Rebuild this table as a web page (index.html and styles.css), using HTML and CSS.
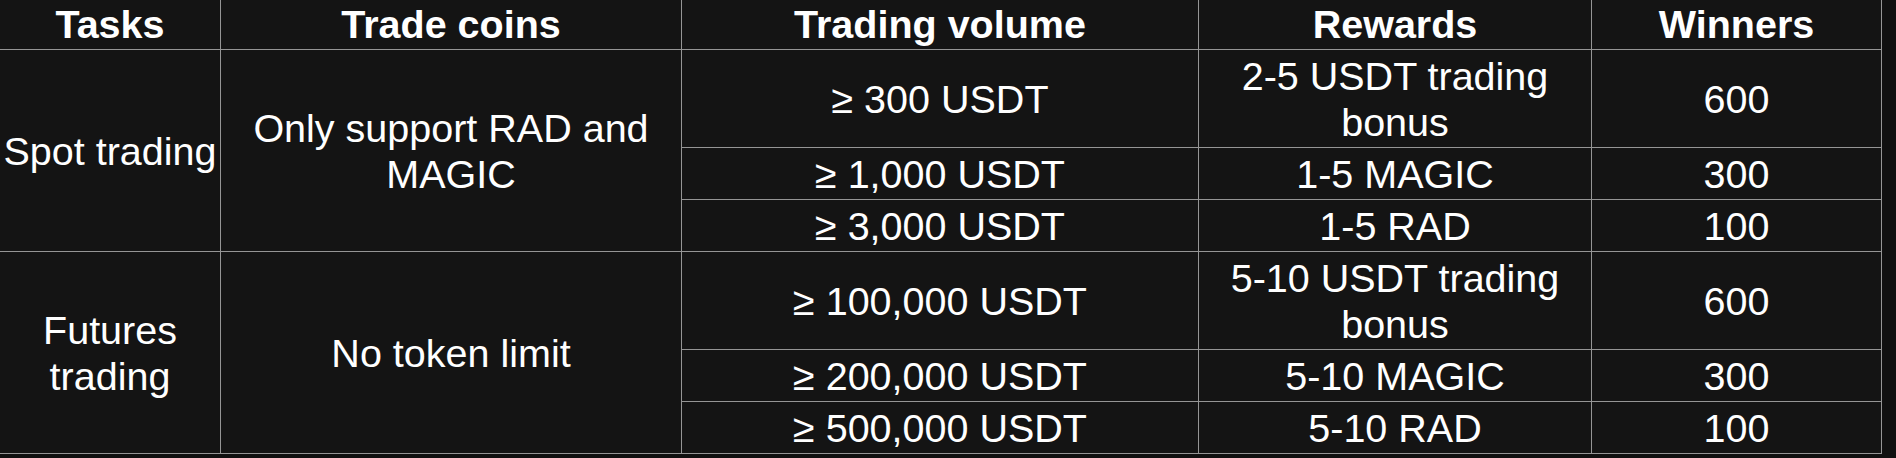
FILE: index.html
```html
<!DOCTYPE html>
<html lang="en">
<head>
<meta charset="utf-8">
<title>Tasks</title>
<link rel="stylesheet" href="styles.css">
</head>
<body>
<table class="tasks">
  <colgroup>
    <col class="c-task">
    <col class="c-coins">
    <col class="c-volume">
    <col class="c-rewards">
    <col class="c-winners">
  </colgroup>
  <thead>
    <tr>
      <th>Tasks</th>
      <th>Trade coins</th>
      <th>Trading volume</th>
      <th>Rewards</th>
      <th>Winners</th>
    </tr>
  </thead>
  <tbody>
    <tr class="tall">
      <td rowspan="3">Spot trading</td>
      <td rowspan="3">Only support RAD and MAGIC</td>
      <td>≥ 300 USDT</td>
      <td>2-5 USDT trading bonus</td>
      <td>600</td>
    </tr>
    <tr>
      <td>≥ 1,000 USDT</td>
      <td>1-5 MAGIC</td>
      <td>300</td>
    </tr>
    <tr>
      <td>≥ 3,000 USDT</td>
      <td>1-5 RAD</td>
      <td>100</td>
    </tr>
    <tr class="tall">
      <td rowspan="3">Futures trading</td>
      <td rowspan="3">No token limit</td>
      <td>≥ 100,000 USDT</td>
      <td>5-10 USDT trading bonus</td>
      <td>600</td>
    </tr>
    <tr>
      <td>≥ 200,000 USDT</td>
      <td>5-10 MAGIC</td>
      <td>300</td>
    </tr>
    <tr>
      <td>≥ 500,000 USDT</td>
      <td>5-10 RAD</td>
      <td>100</td>
    </tr>
  </tbody>
</table>
</body>
</html>
```

FILE: styles.css
```css
html, body {
  margin: 0;
  padding: 0;
  background: #101010;
}

body {
  font-family: "Liberation Sans", Arial, sans-serif;
  color: #ffffff;
  overflow: hidden;
}

.tasks {
  border-collapse: collapse;
  table-layout: fixed;
  width: 1882px;
  margin-left: -1px;
  background: #141414;
  font-size: 39.5px;
  line-height: 46px;
}

.c-task { width: 221px; }
.c-coins { width: 461px; }
.c-volume { width: 517px; }
.c-rewards { width: 393px; }
.c-winners { width: 290px; }

.tasks th,
.tasks td {
  border: 1px solid #959595;
  padding: 2.5px 0;
  text-align: center;
  vertical-align: middle;
}

.tasks th {
  font-weight: bold;
  border-top: none;
  padding: 1px 0 2px;
}

.tasks td {
  font-weight: normal;
}
```
